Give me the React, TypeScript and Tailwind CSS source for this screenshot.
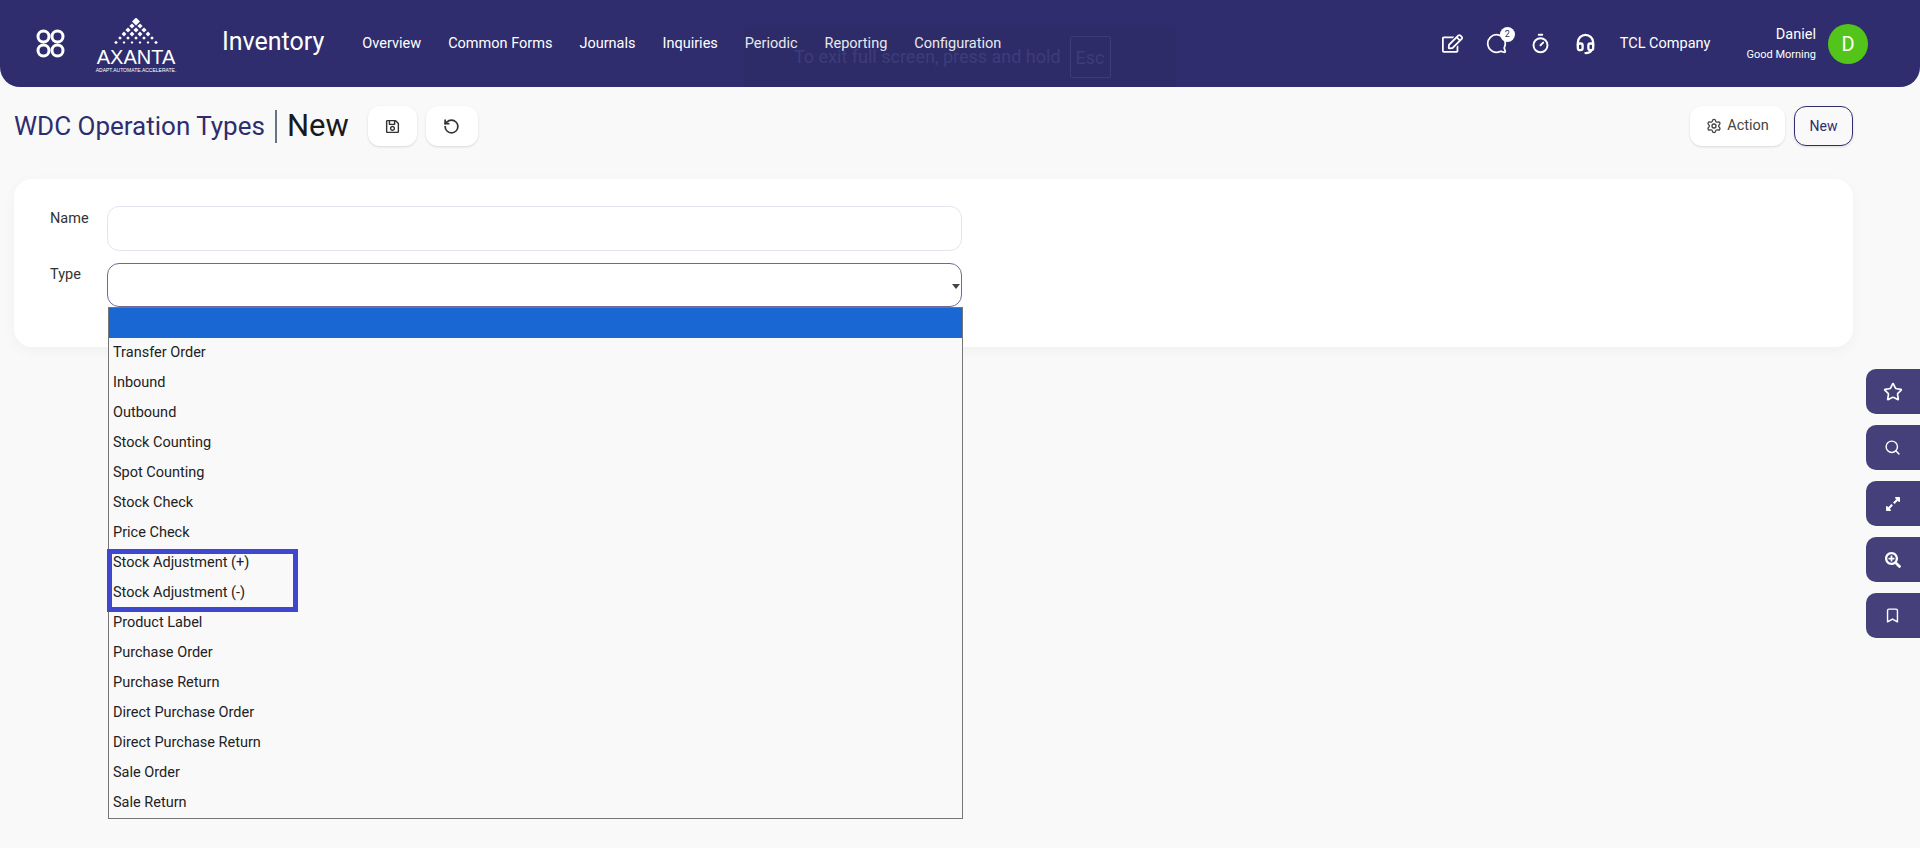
import React from 'react';
import { Bookmark, MessageCircle, RotateCcw, Search, Settings, Star, Timer } from 'lucide-react';
import { FaExpandAlt, FaRegEdit, FaRegSave, FaSearchPlus } from 'react-icons/fa';
import { TbHeadset } from 'react-icons/tb';

const navItems = ['Overview', 'Common Forms', 'Journals', 'Inquiries', 'Periodic', 'Reporting', 'Configuration'];

const options = [
  'Transfer Order',
  'Inbound',
  'Outbound',
  'Stock Counting',
  'Spot Counting',
  'Stock Check',
  'Price Check',
  'Stock Adjustment (+)',
  'Stock Adjustment (-)',
  'Product Label',
  'Purchase Order',
  'Purchase Return',
  'Direct Purchase Order',
  'Direct Purchase Return',
  'Sale Order',
  'Sale Return',
];

const AppsIcon = () => (
  <svg width="29" height="29" viewBox="0 0 29 29" fill="none" stroke="white" strokeWidth="3">
    <circle cx="7.5" cy="7.5" r="5.5" />
    <circle cx="21.5" cy="7.5" r="5.5" />
    <circle cx="7.5" cy="21.5" r="5.5" />
    <circle cx="21.5" cy="21.5" r="5.5" />
  </svg>
);

const diamonds = [
  [30, 3.5, 4],
  [26, 8, 2.6], [34, 8, 2.6],
  [22, 12, 2.6], [30, 12, 2.6], [38, 12, 2.6],
  [18, 16, 2.4], [26, 16, 2.4], [34, 16, 2.4], [42, 16, 2.4],
  [14, 20, 1.8], [22, 20, 1.8], [30, 20, 1.8], [38, 20, 1.8], [46, 20, 1.8],
  [10, 24.5, 1.8], [18, 24.5, 1.4], [26, 24.5, 1.4], [34, 24.5, 1.4], [42, 24.5, 1.4], [50, 24.5, 1.8],
];

const AxantaLogo = () => (
  <div className="flex w-[88px] flex-col items-center" style={{ fontFamily: '"Liberation Sans", sans-serif' }}>
    <svg width="60" height="28" viewBox="0 0 60 28" fill="white">
      {diamonds.map(([x, y, r], i) => (
        <polygon key={i} points={`${x},${y - r} ${x + r},${y} ${x},${y + r} ${x - r},${y}`} />
      ))}
    </svg>
    <span className="mt-[3px] text-[20px] leading-[17px] font-light text-white">AXANTA</span>
    <span className="mt-[1px] text-[5px] leading-[6px] whitespace-nowrap text-white">ADAPT.AUTOMATE.ACCELERATE.</span>
  </div>
);

const Header = () => (
  <header className="relative flex h-[87px] items-center rounded-b-[20px] bg-[#2f2d6e] text-white">
    <div className="ml-[36px]">
      <AppsIcon />
    </div>
    <div className="ml-[27px] pt-[3px]">
      <AxantaLogo />
    </div>
    <span className="mb-[4px] ml-[42px] text-[25px] leading-none">Inventory</span>
    <nav className="ml-[38px] flex gap-[27px] pt-[1px] text-[14.5px]">
      {navItems.map((item) => (
        <span key={item}>{item}</span>
      ))}
    </nav>
    <div className="ml-auto flex items-center">
      <FaRegEdit size={21} />
      <div className="relative ml-[23px]">
        <MessageCircle size={21} strokeWidth={2} className="-scale-x-100" />
        <span className="absolute -top-[6px] left-[14px] flex h-[15px] w-[15px] items-center justify-center rounded-full bg-white text-[9px] text-[#2f2d6e]">
          2
        </span>
      </div>
      <Timer size={21} strokeWidth={2.2} className="ml-[23px]" />
      <TbHeadset size={23} strokeWidth={2.4} className="ml-[23px]" />
      <span className="ml-[23px] text-[14.5px]">TCL Company</span>
      <div className="ml-[36px] flex flex-col items-end">
        <span className="text-[14.5px] leading-[20px]">Daniel</span>
        <span className="mt-[2px] text-[11px] leading-[16px]">Good Morning</span>
      </div>
      <div className="mr-[52px] ml-[12px] flex h-[40px] w-[40px] items-center justify-center rounded-full bg-[#52c41a] text-[20px]">
        D
      </div>
    </div>
    <div className="absolute top-[27px] left-[744px] flex h-[60px] w-[432px] items-start bg-[#1f2937]/10">
      <span className="mt-[17px] ml-[50px] text-[18px] leading-[26px] text-[#3e3c78]">To exit full screen, press and hold</span>
      <span className="mt-[9px] ml-[9px] flex h-[42px] w-[41px] items-center justify-center rounded-[2px] border border-[#3e3c78] text-[18px] text-[#3e3c78]">
        Esc
      </span>
    </div>
  </header>
);

const Toolbar = () => (
  <div className="mt-[19px] flex h-[40px] items-center pr-[67px] pl-[14px]">
    <span className="text-[26px] text-[#2f2d6e]">WDC Operation Types</span>
    <span className="mx-[10px] h-[33px] w-[2px] bg-[#6b7280]" />
    <span className="text-[31px] text-[#1a1a1a]">New</span>
    <button className="ml-[19px] flex h-[40px] w-[49px] items-center justify-center rounded-[12px] bg-white text-[#333] shadow-sm">
      <FaRegSave size={15} />
    </button>
    <button className="ml-[9px] flex h-[40px] w-[52px] items-center justify-center rounded-[12px] bg-white text-[#333] shadow-sm">
      <RotateCcw size={17} strokeWidth={2.4} />
    </button>
    <button className="ml-auto flex h-[40px] w-[95px] items-center justify-center gap-[5px] rounded-[12px] bg-white text-[14.5px] text-[#444] shadow-sm">
      <Settings size={16} />
      Action
    </button>
    <button className="ml-[9px] h-[40px] w-[59px] rounded-[12px] border border-[#2f2d6e] text-[14px] text-[#2f2d6e] shadow-sm">
      New
    </button>
  </div>
);

const TypeDropdown = () => (
  <div className="absolute top-[128px] left-[94px] w-[855px] border border-[#767676] bg-[#f9f9f9] text-[14.5px] text-[#222]">
    <div className="h-[30px] bg-[#1967d2]" />
    {options.map((option) => (
      <div key={option} className="flex h-[30px] items-center pl-[4px]">
        {option}
      </div>
    ))}
    <div className="absolute top-[241px] -left-[2px] h-[63px] w-[191px] border-[5px] border-[#3f48cc]" />
  </div>
);

const FormCard = () => (
  <div className="relative mt-[33px] mr-[67px] ml-[14px] h-[168px] rounded-[18px] bg-white pt-[27px] pl-[36px] shadow-[0_4px_14px_rgba(0,0,0,0.04)]">
    <div className="flex">
      <label className="w-[57px] pt-[2px] text-[14.5px] text-[#333]">Name</label>
      <div className="h-[45px] w-[855px] rounded-[12px] border border-[#e4e4f0] bg-white" />
    </div>
    <div className="mt-[12px] flex">
      <label className="w-[57px] pt-[1px] text-[14.5px] text-[#333]">Type</label>
      <div className="relative h-[44px] w-[855px] rounded-[12px] border border-[#6d6a9a] bg-white">
        <span className="absolute top-[20px] right-[1px] h-0 w-0 border-x-[4px] border-t-[5px] border-x-transparent border-t-[#444]" />
      </div>
    </div>
    <TypeDropdown />
  </div>
);

const SideButtons = () => (
  <div className="absolute top-[369px] right-0 flex w-[54px] flex-col gap-[11px]">
    {[
      <Star size={20} key="star" />,
      <Search size={17} key="search" />,
      <FaExpandAlt size={16} key="expand" />,
      <FaSearchPlus size={16} key="zoom" />,
      <Bookmark size={17} key="bookmark" />,
    ].map((icon) => (
      <div key={icon.key} className="flex h-[45px] items-center justify-center rounded-l-[10px] bg-[#45407a] pr-[1px] text-white">
        {icon}
      </div>
    ))}
  </div>
);

export default function App() {
  return (
    <div
      className="relative h-[848px] w-full overflow-hidden bg-[#f9f9f9]"
      style={{ fontFamily: 'Roboto, "Liberation Sans", sans-serif' }}
    >
      <Header />
      <Toolbar />
      <FormCard />
      <SideButtons />
    </div>
  );
}
